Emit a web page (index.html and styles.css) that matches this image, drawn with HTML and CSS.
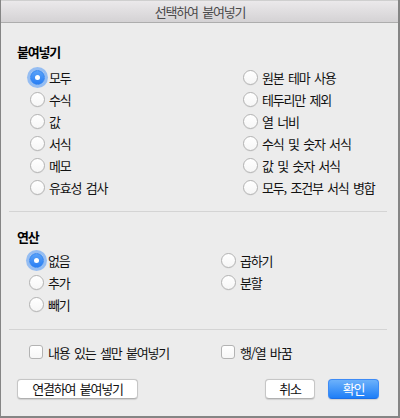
FILE: index.html
```
<!DOCTYPE html>
<html lang="ko">
<head>
<meta charset="utf-8">
<title>선택하여 붙여넣기</title>
<link rel="stylesheet" href="styles.css">
</head>
<body>
<div class="window">
  <div class="titlebar">선택하여 붙여넣기</div>
  <div class="content">
    <section class="group">
      <h2 class="heading">붙여넣기</h2>
      <div class="options paste-options">
        <div class="col">
          <label class="opt"><span class="radio checked"></span><span>모두</span></label>
          <label class="opt"><span class="radio"></span><span>수식</span></label>
          <label class="opt"><span class="radio"></span><span>값</span></label>
          <label class="opt"><span class="radio"></span><span>서식</span></label>
          <label class="opt"><span class="radio"></span><span>메모</span></label>
          <label class="opt"><span class="radio"></span><span>유효성 검사</span></label>
        </div>
        <div class="col">
          <label class="opt"><span class="radio"></span><span>원본 테마 사용</span></label>
          <label class="opt"><span class="radio"></span><span>테두리만 제외</span></label>
          <label class="opt"><span class="radio"></span><span>열 너비</span></label>
          <label class="opt"><span class="radio"></span><span>수식 및 숫자 서식</span></label>
          <label class="opt"><span class="radio"></span><span>값 및 숫자 서식</span></label>
          <label class="opt"><span class="radio"></span><span>모두, 조건부 서식 병합</span></label>
        </div>
      </div>
    </section>
    <hr class="sep sep-1">
    <section class="group">
      <h2 class="heading heading-ops">연산</h2>
      <div class="options ops-options">
        <div class="col">
          <label class="opt"><span class="radio checked"></span><span>없음</span></label>
          <label class="opt"><span class="radio"></span><span>추가</span></label>
          <label class="opt"><span class="radio"></span><span>빼기</span></label>
        </div>
        <div class="col">
          <label class="opt"><span class="radio"></span><span>곱하기</span></label>
          <label class="opt"><span class="radio"></span><span>분할</span></label>
        </div>
      </div>
    </section>
    <hr class="sep sep-2">
    <div class="options checks">
      <label class="opt"><span class="check"></span><span>내용 있는 셀만 붙여넣기</span></label>
      <label class="opt"><span class="check"></span><span>행/열 바꿈</span></label>
    </div>
    <div class="buttons">
      <button class="btn btn-link">연결하여 붙여넣기</button>
      <span class="spacer"></span>
      <button class="btn btn-cancel">취소</button>
      <button class="btn btn-primary">확인</button>
    </div>
  </div>
</div>
</body>
</html>
```

FILE: styles.css
```
* { box-sizing: border-box; }
html, body { margin: 0; padding: 0; }
body {
  width: 400px;
  height: 418px;
  overflow: hidden;
  background: #ececec;
  font-family: "Noto Sans CJK KR", "Noto Sans", sans-serif;
  font-size: 13px;
  color: #111;
}
.window {
  width: 400px;
  height: 418px;
  background: #ececec;
  border-left: 1px solid #858585;
  border-right: 2px solid #858585;
  border-bottom: 2px solid #858585;
  display: flex;
  flex-direction: column;
}
.titlebar {
  height: 23px;
  line-height: 22px;
  text-align: center;
  color: #4a4a4a;
  letter-spacing: -1.2px;
  word-spacing: 2px;
  background: linear-gradient(#ebe9eb, #d4d2d4);
  border-top: 1px solid #cfcfcf;
  border-bottom: 1px solid #adadad;
  padding-left: 1px;
}
.content {
  padding: 21px 19px 0 16px;
  display: flex;
  flex-direction: column;
}
.heading {
  margin: 0 0 6px 0;
  font-size: 13px;
  font-weight: 700;
  line-height: 16px;
  letter-spacing: -1.2px;
  color: #000;
}
.heading-ops { margin-top: 17px; margin-bottom: 4px; }
.options { display: flex; }
.col { display: flex; flex-direction: column; }
.paste-options { padding-left: 13px; }
.paste-options .col:first-child { width: 213px; }
.ops-options { padding-left: 12px; }
.ops-options .col:first-child { width: 192px; }
.checks { padding-left: 12px; margin-top: 11px; }
.checks .opt:first-child { width: 192px; }
.opt {
  display: flex;
  align-items: center;
  height: 22px;
  gap: 4px;
  letter-spacing: -1.2px;
  word-spacing: 2px;
  white-space: nowrap;
}
.radio {
  flex: none;
  width: 15px;
  height: 15px;
  border-radius: 50%;
  border: 1px solid #b3b3b3;
  background: linear-gradient(#ffffff, #f6f6f6);
  box-shadow: 0 0.5px 0.5px rgba(0,0,0,0.08);
  display: flex;
  align-items: center;
  justify-content: center;
}
.radio.checked {
  border-color: #2f84f3;
  background: linear-gradient(#5aa2f8, #2a7ff4);
  box-shadow: 0 0 0 3px rgba(92, 158, 246, 0.6);
}
.radio.checked::after {
  content: "";
  width: 5px;
  height: 5px;
  border-radius: 50%;
  background: #fff;
}
.check {
  flex: none;
  width: 14px;
  height: 14px;
  border-radius: 3px;
  border: 1px solid #b3b3b3;
  background: linear-gradient(#ffffff, #f6f6f6);
  margin-right: 1px;
}
.sep {
  border: 0;
  height: 1px;
  background: #d4d4d4;
  margin: 0 -8px;
}
.sep-1 { margin-top: 13px; }
.sep-2 { margin-top: 14px; }
.buttons {
  display: flex;
  align-items: center;
  margin-top: 16px;
  gap: 13px;
}
.spacer { flex: 1; }
.btn {
  font-family: inherit;
  font-size: 13px;
  letter-spacing: -1.2px;
  word-spacing: 2px;
  height: 20px;
  padding: 0;
  line-height: 18px;
  border-radius: 4px;
  border: 1px solid #c6c6c6;
  border-bottom-color: #b0b0b0;
  background: #fff;
  color: #111;
  box-shadow: 0 0.5px 1px rgba(0,0,0,0.12);
}
.btn-link { width: 121px; }
.btn-cancel { width: 50px; }
.btn-primary {
  width: 51px;
  color: #fff;
  border-color: #3d8bf6;
  border-bottom-color: #1c6fe6;
  background: linear-gradient(#6cb1fb, #1e7ef7);
}
```
